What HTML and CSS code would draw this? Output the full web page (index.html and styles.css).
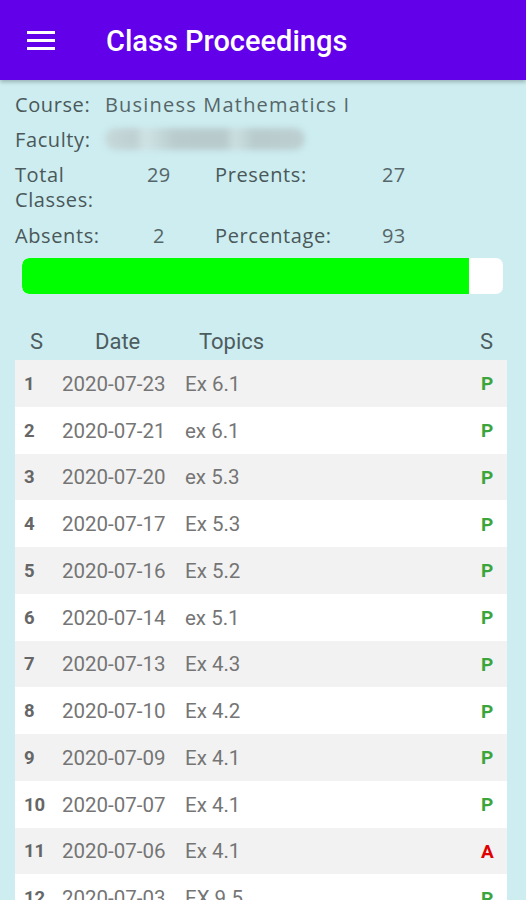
FILE: index.html
```html
<!DOCTYPE html>
<html>
<head>
<meta charset="utf-8">
<link rel="stylesheet" href="styles.css">
</head>
<body>
<header class="appbar">
  <svg class="menu" width="28" height="19" viewBox="0 0 28 19"><rect x="0" y="0" width="28" height="3" fill="#fff"/><rect x="0" y="8" width="28" height="3" fill="#fff"/><rect x="0" y="16" width="28" height="3" fill="#fff"/></svg>
  <h1 class="title">Class Proceedings</h1>
</header>
<main class="content">
  <div class="info">
    <div class="line"><span class="lbl">Course:</span><span class="val course">Business Mathematics I</span></div>
    <div class="line"><span class="lbl">Faculty:</span><span class="blur"></span></div>
    <div class="grid">
      <span class="lbl">Total Classes:</span><span class="num n1">29</span>
      <span class="lbl">Presents:</span><span class="num">27</span>
      <span class="lbl">Absents:</span><span class="num n2">2</span>
      <span class="lbl">Percentage:</span><span class="num">93</span>
    </div>
  </div>
  <div class="bar"><div class="fill" style="width:93%"></div></div>
  <div class="thead">
    <span class="c-s">S</span><span class="c-d">Date</span><span class="c-t">Topics</span><span class="c-st">S</span>
  </div>
  <div class="table">
    <div class="row"><span class="c-n">1</span><span class="c-date">2020-07-23</span><span class="c-top">Ex 6.1</span><span class="st p">P</span></div>
    <div class="row"><span class="c-n">2</span><span class="c-date">2020-07-21</span><span class="c-top">ex 6.1</span><span class="st p">P</span></div>
    <div class="row"><span class="c-n">3</span><span class="c-date">2020-07-20</span><span class="c-top">ex 5.3</span><span class="st p">P</span></div>
    <div class="row"><span class="c-n">4</span><span class="c-date">2020-07-17</span><span class="c-top">Ex 5.3</span><span class="st p">P</span></div>
    <div class="row"><span class="c-n">5</span><span class="c-date">2020-07-16</span><span class="c-top">Ex 5.2</span><span class="st p">P</span></div>
    <div class="row"><span class="c-n">6</span><span class="c-date">2020-07-14</span><span class="c-top">ex 5.1</span><span class="st p">P</span></div>
    <div class="row"><span class="c-n">7</span><span class="c-date">2020-07-13</span><span class="c-top">Ex 4.3</span><span class="st p">P</span></div>
    <div class="row"><span class="c-n">8</span><span class="c-date">2020-07-10</span><span class="c-top">Ex 4.2</span><span class="st p">P</span></div>
    <div class="row"><span class="c-n">9</span><span class="c-date">2020-07-09</span><span class="c-top">Ex 4.1</span><span class="st p">P</span></div>
    <div class="row"><span class="c-n">10</span><span class="c-date">2020-07-07</span><span class="c-top">Ex 4.1</span><span class="st p">P</span></div>
    <div class="row"><span class="c-n">11</span><span class="c-date">2020-07-06</span><span class="c-top">Ex 4.1</span><span class="st a">A</span></div>
    <div class="row"><span class="c-n">12</span><span class="c-date">2020-07-03</span><span class="c-top">EX 9.5</span><span class="st p">P</span></div>
  </div>
</main>
</body>
</html>
```
FILE: styles.css
```css
* { box-sizing: border-box; }
html, body { margin: 0; padding: 0; }
body {
  width: 526px;
  height: 900px;
  overflow: hidden;
  background: #cdedf0;
  font-family: Roboto, "Liberation Sans", sans-serif;
}
.appbar {
  height: 80px;
  background: #6200ea;
  display: flex;
  align-items: center;
  padding-left: 27px;
  box-shadow: 0 2px 4px rgba(0,0,0,0.25);
  position: relative;
  z-index: 1;
}
.title {
  margin: 2px 0 0 51px;
  color: #fff;
  font-family: Roboto, sans-serif;
  font-weight: 500;
  font-size: 29px;
}
.content { padding: 6.5px 19px 0 15px; }
.info {
  font-family: "Open Sans", sans-serif;
  color: #4a5859;
  font-size: 20px;
  font-weight: 500;
  letter-spacing: 0.6px;
}
.line { display: flex; align-items: center; height: 35px; }
.line .lbl { width: 90px; }
.course { color: #566668; font-weight: 400; letter-spacing: 1.2px; }
.blur {
  display: block;
  width: 200px;
  height: 22px;
  border-radius: 11px;
  background: linear-gradient(90deg, #c6d8da 0, #bfd0d2 15%, #cfe3e5 20%, #b9cbcd 35%, #b8cacc 60%, #cbdfe1 65%, #b8cacc 75%, #bdcfd1 100%);
  filter: blur(3px);
}
.grid {
  display: grid;
  grid-template-columns: 132px 68px 167px auto;
  row-gap: 11px;
  margin-top: 5px;
  line-height: 25px;
}
.grid .lbl { width: 100px; }
.num { color: #566668; font-weight: 400; letter-spacing: 0.3px; }
.n2 { padding-left: 6px; }
.bar {
  margin: 10.5px 0 0 7px;
  width: 481px;
  height: 36px;
  background: #fff;
  border-radius: 7px;
  overflow: hidden;
}
.fill { height: 100%; background: #00ff00; border-radius: 7px 0 0 7px; }
.thead {
  display: flex;
  align-items: flex-end;
  height: 48px;
  margin-top: 18px;
  padding-bottom: 5px;
  font-size: 22px;
  line-height: 26px;
  color: #4d5c5e;
}
.thead .c-s { width: 80px; padding-left: 15px; }
.thead .c-d { width: 104px; }
.thead .c-t { flex: 1; }
.thead .c-st { width: 27px; }
.table { width: 492px; }
.row {
  display: flex;
  align-items: center;
  height: 46.75px;
  padding-top: 1px;
  background: #f2f2f2;
  font-size: 20.5px;
}
.row:nth-child(even) { background: #fff; }
.c-n { width: 47px; padding-left: 9px; font-weight: 700; color: #666; font-size: 18.5px; }
.c-date { width: 123px; color: #757575; }
.c-top { flex: 1; color: #757575; }
.st { width: 26px; font-weight: 700; font-size: 19px; }
.p { color: #3ba53d; }
.a { color: #e00000; }
```
